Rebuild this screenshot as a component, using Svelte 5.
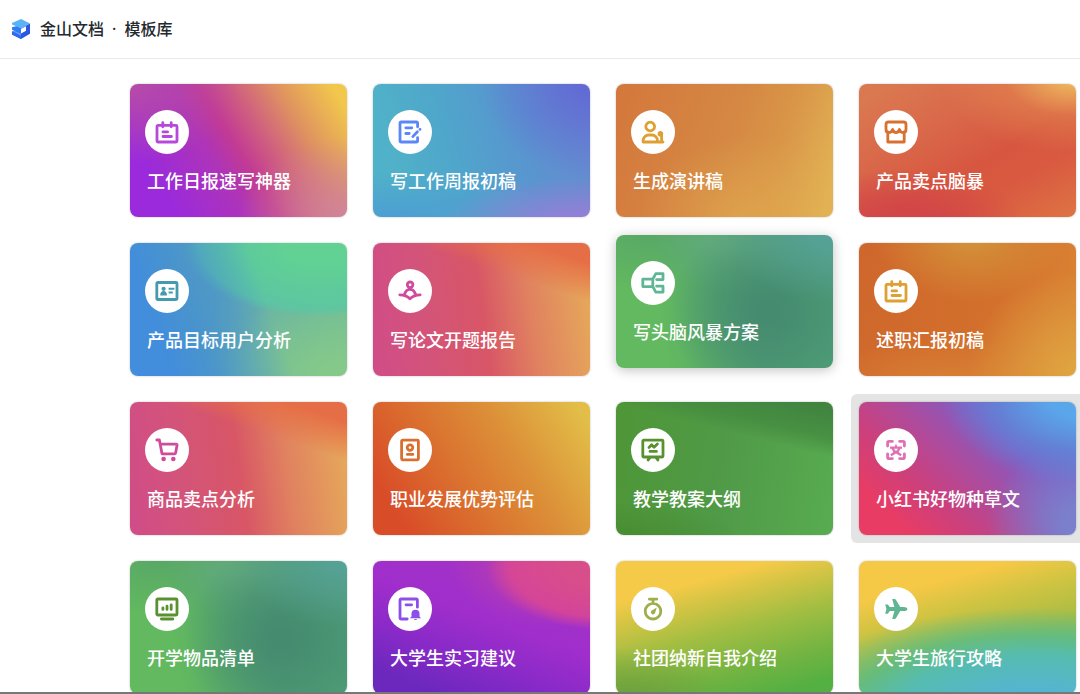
<script lang="ts">
  // Icons are drawn on a 24x24 grid: `line` is stroked, `solid` is filled.
  interface Icon {
    line?: string;
    solid?: string;
  }

  interface Template {
    title: string;
    icon: string;
    theme: string;
    color: string;
    state?: 'raised' | 'focused';
  }

  const icons: Record<string, Icon> = {
    calendar: {
      line: 'M3 5.4h18a1 1 0 0 1 1 1V21a1 1 0 0 1-1 1H3a1 1 0 0 1-1-1V6.4a1 1 0 0 1 1-1zM7.8 2.6v4.2M16.2 2.6v4.2M8 11.9h4.6M8 16.5h8.4',
    },
    edit: {
      line: 'M19.6 6.8V3a1 1 0 0 0-1-1H3a1 1 0 0 0-1 1v18a1 1 0 0 0 1 1h15.6a1 1 0 0 0 1-1v-3.4M7.8 7.8h6M7.8 13.5h3.4M14.8 16.6l4.6-4.8M22 9.4v0',
    },
    speaker: {
      line: 'M4.8 6.5a4.4 4.4 0 1 0 8.8 0a4.4 4.4 0 1 0-8.8 0zM2.1 22v-1.4a5.6 5.6 0 0 1 5.6-5.6h3.2a5.6 5.6 0 0 1 5.6 5.6V22zM16.5 22H22M20.6 21v-6.5',
      solid: 'M16.6 13.8a2.8 2.8 0 1 1 5.6 0a2.8 2.8 0 1 1-5.6 0z',
    },
    shop: {
      line: 'M2 9.5v-5A2.5 2.5 0 0 1 4.5 2h15A2.5 2.5 0 0 1 22 4.5v5c0 4.2-5 4.2-6.6 0c-1.4 4-5.4 4-6.8 0c-1.6 4.2-6.6 4.2-6.6 0zM3.8 12v10h16.4V12',
    },
    idCard: {
      line: 'M2.8 3.5h18.2a1 1 0 0 1 1 1v15a1 1 0 0 1-1 1H2.8a1 1 0 0 1-1-1v-15a1 1 0 0 1 1-1z',
      solid: 'M6.5 9.8a2.1 2.1 0 1 1 4.2 0a2.1 2.1 0 1 1-4.2 0zM5.2 16.4c0-2.8 1.3-4.4 3.4-4.4s3.4 1.6 3.4 4.4zM13.6 8.8h5.8v2h-5.8zM13.6 12.4h4.2v2h-4.2z',
    },
    reader: {
      line: 'M9.3 5.8a2.8 2.8 0 1 0 5.6 0a2.8 2.8 0 1 0-5.6 0zM1.8 15.8c4.2 0 7.4 1 10.2 4c2.8-3 6-4 10.2-4M6.4 15.8c1-3.6 3-5.4 5.6-5.4s4.6 1.8 5.6 5.4',
    },
    mindMap: {
      line: 'M1.8 8.2h10v7.4h-10zM11.8 8.2l3-5.6H22v6h-6.4M11.8 15.6l3 5.6H22v-6h-6.4',
    },
    cart: {
      line: 'M1.8 2h2.6L7 15.8h12.6a1 1 0 0 0 1-.8L22.1 7a.8.8 0 0 0-.8-.9H5.4',
      solid: 'M6.3 21a2.3 2.3 0 1 1 4.6 0a2.3 2.3 0 1 1-4.6 0zM16 21a2.3 2.3 0 1 1 4.6 0a2.3 2.3 0 1 1-4.6 0z',
    },
    badge: {
      line: 'M4.6 2.2h14.8a1 1 0 0 1 1 1v17.6a1 1 0 0 1-1 1H4.6a1 1 0 0 1-1-1V3.2a1 1 0 0 1 1-1zM9.2 9.6a2.8 2.8 0 1 0 5.6 0a2.8 2.8 0 1 0-5.6 0zM9.3 16.4h5.6',
    },
    board: {
      line: 'M2.8 2.2h18.2a1 1 0 0 1 1 1V18a1 1 0 0 1-1 1H2.8a1 1 0 0 1-1-1V3.2a1 1 0 0 1 1-1zM8 9.4l2.6-2.6 2.4 2.4L16.4 6M9 13.4h6.4M9 19.6l-2 2.4M15 19.6l2 2.4',
    },
    scan: {
      line: 'M3.6 8V4.8a1.4 1.4 0 0 1 1.4-1.4h3.4M15.6 3.4H19a1.4 1.4 0 0 1 1.4 1.4V8M20.4 16v3.2a1.4 1.4 0 0 1-1.4 1.4h-3.4M8.4 20.6H5a1.4 1.4 0 0 1-1.4-1.4V16',
      solid: 'M12 5.6l1.2 3h4.8v2.2h-1.4l-2 3.2 3.2 2.6-1.3 1.7L12 15.4l-4.5 2.9-1.3-1.7L9.4 14l-2-3.2H6V8.6h4.8zM9.9 10.8L12 13l2.1-2.2z',
    },
    screen: {
      line: 'M2.8 2h18.2a1 1 0 0 1 1 1v14a1 1 0 0 1-1 1H2.8a1 1 0 0 1-1-1V3a1 1 0 0 1 1-1zM6.4 22h11.4M7.9 10.8v1.6M12 9.2v3.2M16.2 7.8v4.6',
    },
    reminder: {
      line: 'M19.4 10.2V3a1 1 0 0 0-1-1H3a1 1 0 0 0-1 1v18a1 1 0 0 0 1 1h6.2M8 7.8h5.6',
      solid: 'M17.5 12.8a4 4 0 0 1 4 4v2.6l1.6 1.8H11.9l1.6-1.8v-2.6a4 4 0 0 1 4-4zM15.8 22h3.4a1.8 1.6 0 0 1-3.4 0z',
    },
    timer: {
      line: 'M4.2 14.2a7.8 7.8 0 1 0 15.6 0a7.8 7.8 0 1 0-15.6 0zM8.4 2.2h7.4M12 2.2v4',
      solid: 'M15.8 10.4l-1.6 5.2c-.6 2-2.4 2.4-3.6 1.2s-.8-3 1-3.8z',
    },
    plane: {
      solid: 'M23.4 12c0 1.4-1.8 2.1-3.8 2.1h-3.4l-4.3 7.1c-.4.6-.8.8-1.4.8H8.2l2.2-7.9H5.8l-2 2.6H1.2L2.4 12 1.2 7.4h2.6l2 2.5h4.6L8.2 2h2.3c.6 0 1 .2 1.4.8l4.3 7.1h3.4c2 0 3.8.7 3.8 2.1z',
    },
  };

  const templates: Template[] = [
    { title: '工作日报速写神器', icon: 'calendar', theme: 'violet', color: '#b648dc' },
    { title: '写工作周报初稿', icon: 'edit', theme: 'ocean', color: '#5b86fa' },
    { title: '生成演讲稿', icon: 'speaker', theme: 'amber', color: '#dfa033' },
    { title: '产品卖点脑暴', icon: 'shop', theme: 'coral', color: '#d97030' },
    { title: '产品目标用户分析', icon: 'idCard', theme: 'lagoon', color: '#449bad' },
    { title: '写论文开题报告', icon: 'reader', theme: 'rose', color: '#d04b9c' },
    { title: '写头脑风暴方案', icon: 'mindMap', theme: 'jade', color: '#5fb594', state: 'raised' },
    { title: '述职汇报初稿', icon: 'calendar', theme: 'copper', color: '#dfa033' },
    { title: '商品卖点分析', icon: 'cart', theme: 'rose', color: '#d04b9c' },
    { title: '职业发展优势评估', icon: 'badge', theme: 'sunset', color: '#d97030' },
    { title: '教学教案大纲', icon: 'board', theme: 'forest', color: '#5a9130' },
    { title: '小红书好物种草文', icon: 'scan', theme: 'berry', color: '#e070b5', state: 'focused' },
    { title: '开学物品清单', icon: 'screen', theme: 'jade', color: '#5a9130' },
    { title: '大学生实习建议', icon: 'reminder', theme: 'orchid', color: '#8c50ea' },
    { title: '社团纳新自我介绍', icon: 'timer', theme: 'lime', color: '#9daf4c' },
    { title: '大学生旅行攻略', icon: 'plane', theme: 'tropic', color: '#5fb594' },
  ];
</script>

<div class="page">
  <header>
    <svg class="logo" viewBox="0 0 18 20" aria-hidden="true">
      <path d="M0 13.2 9 9l9-4.4v10.2L9 20 0 15.6z" fill="#2b55e2" />
      <path d="M0 12.6 4 11l5 3v6l-9-4.6z" fill="#2f6af4" />
      <path d="M0 8.2 5 7l4 2v6L0 10.8z" fill="#2f7df2" />
      <path d="M0 10.8 9 15v1.4L1.6 12.8z" fill="#fff" opacity=".35" />
      <path d="M9 0l9 4.4L9 9.2 0 5.6V4z" fill="#5ab2f7" />
      <path d="M9 9.8 14 7.2v4.6l-5 2.8z" fill="#fff" />
    </svg>
    <h1>金山文档<span class="dot">·</span>模板库</h1>
  </header>

  <main>
    <div class="grid">
      {#each templates as t}
        {@const icon = icons[t.icon]}
        <a
          href="#template"
          class="card {t.theme}"
          class:raised={t.state === 'raised'}
          class:focused={t.state === 'focused'}
        >
          <span class="disc" style="color:{t.color}">
            <svg viewBox="0 0 24 24" aria-hidden="true">
              {#if icon.line}<path class="line" d={icon.line} />{/if}
              {#if icon.solid}<path class="solid" d={icon.solid} />{/if}
            </svg>
          </span>
          <span class="title">{t.title}</span>
        </a>
      {/each}
    </div>
  </main>

  <div class="edge"></div>
</div>

<style>
  :global(body) { margin: 0; background: #fff; }

  .page { display: flex; flex-direction: column; height: 100vh; overflow: hidden; font-family: "Noto Sans CJK SC", sans-serif; }

  header { display: flex; align-items: center; gap: 10px; flex: none; height: 58px; padding: 0 12px; border-bottom: 1px solid #e9e9e9; }
  .logo { width: 18px; height: 20px; }
  h1 { margin: 0; padding-bottom: 2px; font-size: 16px; line-height: 24px; font-weight: 500; color: #24292e; }
  .dot { margin: 0 8px; font-family: "Noto Sans", sans-serif; }

  main { flex: 1; min-height: 0; overflow: hidden; }
  .grid { display: grid; grid-template-columns: repeat(4, 1fr); gap: 26px; padding: 25px 4px 26px 130px; isolation: isolate; }

  .card { position: relative; display: flex; flex-direction: column; align-items: flex-start; gap: 13px; box-sizing: border-box; height: 133px; padding: 26px 15px 0; border-radius: 8px; box-shadow: 0 0 2px rgba(0, 0, 0, 0.3); color: #fff; text-decoration: none; }
  .raised { top: -8px; box-shadow: 0 2px 12px rgba(0, 0, 0, 0.25); }
  .focused::before { content: ''; position: absolute; inset: -8px; z-index: -1; border-radius: 6px; background: #e4e4e4; }

  .disc { display: flex; align-items: center; justify-content: center; width: 44px; height: 44px; border-radius: 50%; background: #fff; }
  .disc svg { width: 24px; height: 24px; }
  .line { fill: none; stroke: currentColor; stroke-width: 2.8; stroke-linecap: round; stroke-linejoin: round; }
  .solid { fill: currentColor; fill-rule: evenodd; }
  .title { margin-left: 2px; font-size: 18px; line-height: 26px; font-weight: 500; white-space: nowrap; }

  .violet {
    background:
      radial-gradient(ellipse 50% 60% at 100% 100%, #d0849a, transparent),
      radial-gradient(ellipse 50% 60% at 0% 0%, #b64ca8, transparent),
      linear-gradient(58deg, #9a2adc 16%, #ae34b8 40%, #c23a94 50%, #d2687a 64%, #e0965e 77%, #f2c84c 95%);
  }
  .ocean {
    background:
      radial-gradient(ellipse 65% 35% at 95% 105%, #9d7cd8, transparent),
      radial-gradient(ellipse 50% 70% at 100% 0%, #6168d4, transparent),
      radial-gradient(ellipse 60% 40% at 10% 105%, #4c9cd4, transparent),
      linear-gradient(75deg, #50b2c8 12%, #4fa6cb 38%, #5896cf 65%, #6a88d0);
  }
  .amber {
    background:
      radial-gradient(ellipse 50% 60% at 60% 100%, rgba(224, 168, 78, 0.7), transparent),
      linear-gradient(110deg, #d4773c, #d58843 50%, #d99548 70%, #e2b354 95%);
  }
  .coral {
    background:
      radial-gradient(ellipse 60% 56% at 98% -4%, #ecb25c 8%, rgba(228, 140, 80, 0.5) 50%, transparent),
      radial-gradient(ellipse 55% 45% at 22% 108%, #d24648 30%, transparent),
      linear-gradient(150deg, #da7850 8%, #d9694a 32%, #d75640 58%, #d95a40 74%, #de7444);
  }
  .lagoon {
    background:
      linear-gradient(70deg, #428ddc 16%, rgba(70, 146, 208, 0.85) 32%, transparent 62%),
      radial-gradient(ellipse 62% 58% at 86% -2%, rgba(96, 212, 146, 0.9) 30%, rgba(90, 200, 162, 0.85) 88%, transparent),
      radial-gradient(ellipse 65% 65% at 100% 100%, #84c88a 20%, transparent),
      linear-gradient(110deg, #5aa0b8 40%, #6cb4a4 62%, #70bc98 90%);
  }
  .rose {
    background:
      linear-gradient(198deg, #e66e46 10%, rgba(230, 110, 70, 0.5) 20%, transparent 29%),
      linear-gradient(82deg, #d04c88, #d3547a 25%, #d85666 50%, #e08060 70%, #e6aa5a 98%);
  }
  .jade {
    background:
      radial-gradient(ellipse 50% 50% at 100% 0%, #57a29a, transparent),
      radial-gradient(ellipse 45% 70% at 70% 58%, #458b70 10%, rgba(69, 139, 112, 0.6) 50%, transparent),
      radial-gradient(ellipse 35% 35% at 52% 8%, #63ab80, transparent),
      radial-gradient(ellipse 50% 40% at 15% 0%, #58a866, transparent),
      linear-gradient(80deg, #62b95f 22%, #509e72 62%, #4e9e78);
  }
  .copper {
    background:
      radial-gradient(ellipse 45% 50% at 52% -6%, #d39038 10%, transparent),
      radial-gradient(ellipse 55% 80% at 104% 100%, #dfa340 15%, transparent),
      radial-gradient(ellipse 60% 40% at 40% 110%, #d88236, transparent),
      linear-gradient(100deg, #cf672c, #d3702c 60%, #da8434);
  }
  .sunset { background: linear-gradient(58deg, #d94c28 12%, #da6c2e 36%, #dc9038 65%, #e2be48 95%); }
  .forest {
    background:
      linear-gradient(194deg, #408440 4%, rgba(66, 136, 62, 0.7) 20%, transparent 30%),
      radial-gradient(ellipse 60% 30% at 0% 105%, #488a30, transparent),
      linear-gradient(100deg, #4e9636, #509a48 50%, #58ac50);
  }
  .berry {
    background:
      radial-gradient(ellipse 66% 66% at 104% -4%, #5aa6ea 25%, rgba(92, 140, 218, 0.7) 62%, transparent),
      radial-gradient(ellipse 45% 60% at 104% 90%, #7a80cc 20%, transparent),
      linear-gradient(44deg, #e83c64 14%, #cc407c 32%, #b04a9a 48%, #805cc4 70%, #6070d0);
  }
  .orchid {
    background:
      radial-gradient(ellipse 56% 48% at 108% 4%, #d84e8a 30%, rgba(222, 72, 144, 0.8) 80%, transparent),
      radial-gradient(ellipse 45% 50% at 80% 0%, #c044a4, transparent),
      linear-gradient(20deg, #6c28bc 12%, #8a2ac8 34%, #a02ecc 55%, #a434c4);
  }
  .lime {
    background:
      radial-gradient(ellipse 45% 40% at 5% 105%, #6c9e3c, transparent),
      linear-gradient(165deg, #f5ca48 22%, #d4c444 34%, #a2be42 52%, #74b442 74%, #54b042 92%);
  }
  .tropic {
    background:
      radial-gradient(ellipse 115% 80% at 80% 115%, #54b4d2 20%, #56bcb0 55%, rgba(92, 188, 132, 0.85) 74%, transparent),
      linear-gradient(165deg, #f5c846 22%, #d0c442 38%, #a8bc44 60%, #70bc80 85%);
  }

  .edge { flex: none; height: 2px; background: #777; }
</style>
